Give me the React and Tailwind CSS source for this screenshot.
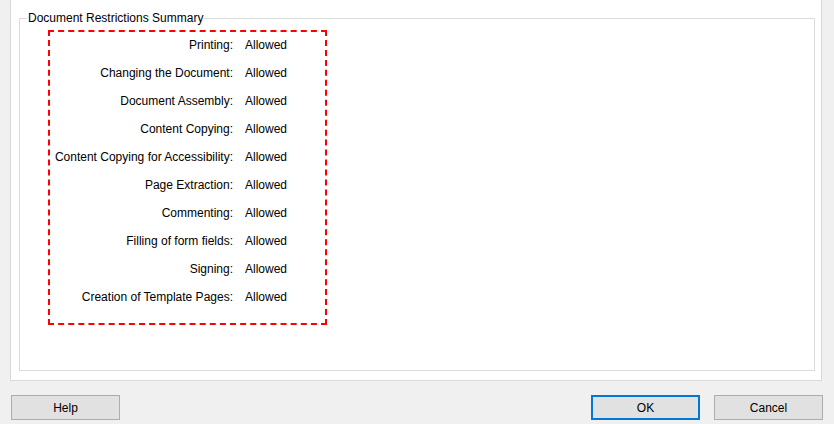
const rows = [
  'Printing',
  'Changing the Document',
  'Document Assembly',
  'Content Copying',
  'Content Copying for Accessibility',
  'Page Extraction',
  'Commenting',
  'Filling of form fields',
  'Signing',
  'Creation of Template Pages',
];

const Button = ({ children, primary }) => (
  <button
    className={
      primary
        ? 'w-[109px] h-[25px] bg-[#e1e1e1] border-2 border-[#0078d7] text-[12px] text-black'
        : 'w-[109px] h-[25px] bg-[#e1e1e1] border border-[#adadad] text-[12px] text-black'
    }
  >
    {children}
  </button>
);

export default function App() {
  return (
    <div
      className="w-[834px] h-[424px] bg-[#f0f0f0] overflow-hidden text-black"
      style={{ fontFamily: '"Liberation Sans", Arial, sans-serif' }}
    >
      <div className="ml-[10px] w-[812px] h-[381px] bg-white border-x border-b border-[#d9d9d9] pt-[18px]">
        <div className="relative ml-[8px] w-[796px] h-[353px] border border-[#dcdcdc]">
          <span className="absolute -top-[9px] left-[7px] bg-white px-[1px] text-[12px] leading-[16px]">
            Document Restrictions Summary
          </span>
          <div className="ml-[28px] mt-[11px] w-[279px] h-[295px] border-2 border-dashed border-[#ff0000] pt-[5px]">
            <div className="flex flex-col gap-y-[12px]">
              {rows.map((r) => (
                <div key={r} className="flex text-[12px] leading-[16px]">
                  <span className="w-[183px] text-right whitespace-nowrap">{r}:</span>
                  <span className="ml-[12px]">Allowed</span>
                </div>
              ))}
            </div>
          </div>
        </div>
      </div>
      <div className="flex mt-[14px] px-[11px] gap-[14px]">
        <Button>Help</Button>
        <div className="ml-auto" />
        <Button primary>OK</Button>
        <Button>Cancel</Button>
      </div>
    </div>
  );
}
